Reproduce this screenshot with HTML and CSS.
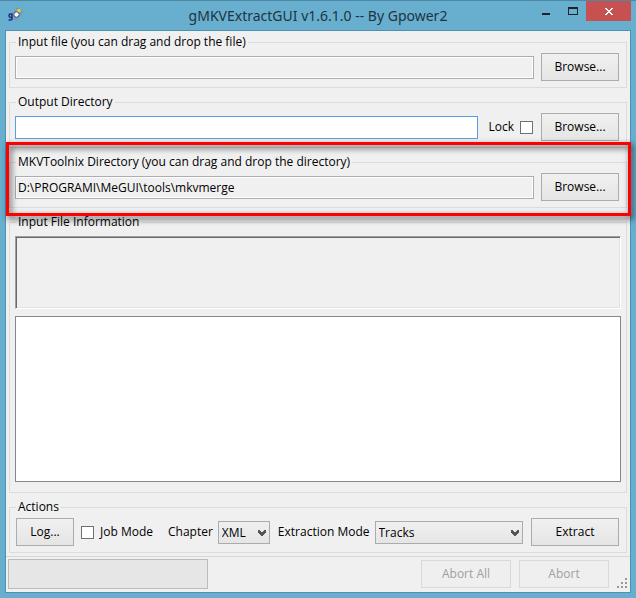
FILE: index.html
```html
<!DOCTYPE html>
<html lang="en">
<head>
<meta charset="utf-8">
<title>gMKVExtractGUI v1.6.1.0 -- By Gpower2</title>
<link rel="stylesheet" href="styles.css">
</head>
<body>
<div class="window">
  <header class="titlebar">
    <svg class="app-icon" width="16" height="16" viewBox="0 0 16 16" aria-hidden="true">
      <ellipse cx="9" cy="7" rx="3" ry="6" fill="none" stroke="#7d94a0" transform="rotate(18 9 7)"/>
      <ellipse cx="9" cy="7" rx="6" ry="3" fill="none" stroke="#8297a3" transform="rotate(-24 9 7)"/>
      <path d="M4.500 7H2.500Q1 7 1 8.500T2.500 10.500H4M4 7V12Q4 13 2.500 13H0.500" fill="none" stroke="#1b2f8c" stroke-width="1.500"/>
      <circle cx="8.500" cy="7.500" r="2.700" fill="#fff" stroke="#3c4880"/>
      <circle cx="11" cy="3.500" r="1.700" fill="#e8d820"/>
    </svg>
    <h1 class="title">gMKVExtractGUI v1.6.1.0 -- By Gpower2</h1>
    <div class="window-buttons">
      <button class="window-button" type="button" aria-label="Minimize"><svg width="10" height="8" viewBox="0 0 10 8"><path d="M1 6h8v2H1z" fill="#222"/></svg></button>
      <button class="window-button" type="button" aria-label="Maximize"><svg width="10" height="8" viewBox="0 0 10 8"><path d="M0 0h10v8H0zM1 2v5h8V2z" fill="#222" fill-rule="evenodd"/></svg></button>
      <button class="window-button close" type="button" aria-label="Close"><svg width="8" height="7" viewBox="0 0 8 7"><path d="M0 0h2v1h1v1h2V1h1V0h2v1H7v1H6v1H5v1h1v1h1v1h1v1H6V6H5V5H3v1H2v1H0V6h1V5h1V4h1V3H2V2H1V1H0z" fill="#fff"/></svg></button>
    </div>
  </header>
  <main class="client">
    <div class="groups">
      <fieldset class="group">
        <legend>Input file (you can drag and drop the file)</legend>
        <div class="row">
          <input class="text-box" type="text" aria-label="Input file" readonly>
          <button class="button browse" type="button">Browse...</button>
        </div>
      </fieldset>
      <fieldset class="group">
        <legend>Output Directory</legend>
        <div class="row">
          <input class="text-box active" type="text" aria-label="Output Directory">
          <label class="check lock">Lock <input type="checkbox"></label>
          <button class="button browse" type="button">Browse...</button>
        </div>
      </fieldset>
      <div class="highlighted">
        <fieldset class="group">
          <legend>MKVToolnix Directory (you can drag and drop the directory)</legend>
          <div class="row">
            <input class="text-box" type="text" aria-label="MKVToolnix Directory" value="D:\PROGRAMI\MeGUI\tools\mkvmerge" readonly>
            <button class="button browse" type="button">Browse...</button>
          </div>
        </fieldset>
      </div>
      <fieldset class="group info">
        <legend>Input File Information</legend>
        <textarea class="file-info" aria-label="Input file information" readonly></textarea>
        <ul class="track-list" aria-label="Tracks"></ul>
      </fieldset>
      <fieldset class="group">
        <legend>Actions</legend>
        <div class="row actions">
          <button class="button log" type="button">Log...</button>
          <label class="check job"><input type="checkbox"> Job Mode</label>
          <label class="field-label" for="chapter">Chapter</label>
          <span class="drop-down chapter">
            <select id="chapter"><option>XML</option></select>
            <svg class="arrow" width="8" height="6" viewBox="0 0 8 6"><path d="M0 0h2v1h1v1h2V1h1V0h2v3H7v1H6v1H5v1H3V5H2V4H1V3H0z" fill="#555"/></svg>
          </span>
          <label class="field-label" for="mode">Extraction Mode</label>
          <span class="drop-down mode">
            <select id="mode"><option>Tracks</option></select>
            <svg class="arrow" width="8" height="6" viewBox="0 0 8 6"><path d="M0 0h2v1h1v1h2V1h1V0h2v3H7v1H6v1H5v1H3V5H2V4H1V3H0z" fill="#555"/></svg>
          </span>
          <button class="button extract" type="button">Extract</button>
        </div>
      </fieldset>
    </div>
    <footer class="status">
      <div class="progress" role="progressbar" aria-label="Progress"></div>
      <button class="button abort" type="button" disabled>Abort All</button>
      <button class="button abort" type="button" disabled>Abort</button>
      <svg class="grip" width="11" height="11" viewBox="0 0 11 11" aria-hidden="true"><path d="M8 0h2v2H8zM4 4h2v2H4zM8 4h2v2H8zM0 8h2v2H0zM4 8h2v2H4zM8 8h2v2H8z" fill="#999"/></svg>
    </footer>
  </main>
</div>
</body>
</html>
```
FILE: styles.css
```css
* {
  box-sizing: border-box;
}

body {
  margin: 0;
  color: #000;
  font: 12px/16px "Open Sans", "Noto Sans", sans-serif;
}

button,
input,
select,
textarea {
  margin: 0;
  color: inherit;
  font: inherit;
}

.window {
  display: flex;
  flex-direction: column;
  min-height: 100vh;
  padding: 0 5px 5px;
  border-top: 1px solid #4b88a5;
  background: #68aecf;
}

.titlebar {
  display: grid;
  grid-template-columns: 1fr auto 1fr;
  height: 29px;
}

.app-icon {
  margin: 6px 0 0 3px;
}

.title {
  margin: 0;
  color: #1f343e;
  font: 14px/29px "Noto Sans", "Open Sans", sans-serif;
  white-space: nowrap;
}

.window-buttons {
  display: flex;
  justify-content: flex-end;
}

.window-button {
  display: flex;
  align-items: center;
  justify-content: center;
  width: 27px;
  height: 20px;
  padding: 0;
  border: 0;
  background: none;
}

.close {
  width: 45px;
  background: #c75050;
}

.client {
  display: flex;
  flex: 1;
  flex-direction: column;
  border: 1px solid #4f8fb0;
  background: #f0f0f0;
}

.groups {
  display: flex;
  flex: 1;
  flex-direction: column;
  gap: 6px;
  padding: 3px;
}

.group {
  min-width: 0;
  margin: 0;
  padding: 3px 7px 6px 5px;
  border: 1px solid #dcdcdc;
}

.group legend {
  margin-left: 1px;
  padding: 0 2px;
}

.row {
  display: flex;
  align-items: flex-start;
}

.text-box {
  flex: 1;
  min-width: 0;
  height: 23px;
  margin-top: 3px;
  padding: 0 2px;
  border: 1px solid #abadb3;
  outline: 0;
  background: #f0f0f0;
  box-shadow: inset 0 0 0 1px #fff;
}

.active {
  border-color: #569de5;
  background: #fff;
}

.button {
  height: 28px;
  padding: 0;
  border: 1px solid #acacac;
  background: linear-gradient(#f0f0f0, #e5e5e5);
}

.button:disabled {
  border-color: #d9d9d9;
  background: #efefef;
  color: #a0a0a0;
}

.browse {
  width: 78px;
  margin-left: 7px;
}

.check {
  display: flex;
  align-items: center;
  gap: 6px;
  height: 28px;
  white-space: nowrap;
}

.check input {
  width: 13px;
  height: 13px;
  border: 1px solid #707070;
  background: #fff;
  appearance: none;
}

.lock {
  margin: 0 1px 0 10px;
}

.highlighted {
  position: relative;
}

.highlighted::after {
  position: absolute;
  inset: -12px -4px -8px -3px;
  border: 3px solid #f00;
  content: "";
  filter: drop-shadow(2px 3px 3px rgb(0 0 0 / 75%));
  pointer-events: none;
}

.info {
  display: flex;
  flex: 1;
  flex-direction: column;
  gap: 7px;
  padding: 6px 5px 9px;
}

.file-info {
  height: 73px;
  border: 1px solid;
  border-color: #a0a0a0 #fff #fff #a0a0a0;
  outline: 0;
  background: #f0f0f0;
  box-shadow: inset 1px 1px #696969, inset -1px -1px #e3e3e3;
  resize: none;
}

.track-list {
  flex: 1;
  min-height: 166px;
  margin: 0;
  padding: 0;
  border: 1px solid #828790;
  background: #fff;
  list-style: none;
}

.actions {
  padding-left: 1px;
}

.log {
  width: 58px;
}

.job {
  margin: 0 15px 0 7px;
}

.field-label {
  line-height: 28px;
  white-space: nowrap;
}

.drop-down {
  position: relative;
  height: 23px;
  margin: 3px 8px 0 5px;
}

.drop-down select {
  width: 100%;
  height: 100%;
  padding: 0 3px;
  border: 1px solid #acacac;
  border-radius: 0;
  background: linear-gradient(#f0f0f0, #e5e5e5);
  appearance: none;
}

.arrow {
  position: absolute;
  top: 9px;
  right: 4px;
  pointer-events: none;
}

.chapter {
  width: 52px;
}

.mode {
  flex: 1;
}

.extract {
  width: 88px;
}

.status {
  display: flex;
  align-items: center;
  padding: 2px 2px 3px;
  border-top: 1px solid #d7d7d7;
}

.progress {
  width: 200px;
  height: 30px;
  margin-right: auto;
  border: 1px solid #bcbcbc;
  background: #e6e6e6;
}

.abort {
  width: 90px;
  margin-right: 8px;
}

.grip {
  align-self: flex-end;
}
```
